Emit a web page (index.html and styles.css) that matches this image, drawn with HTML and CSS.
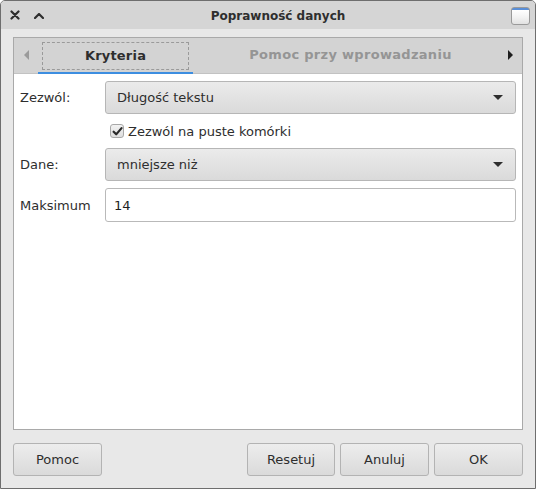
FILE: index.html
```html
<!DOCTYPE html>
<html lang="pl">
<head>
<meta charset="utf-8">
<title>Poprawność danych</title>
<link rel="stylesheet" href="styles.css">
</head>
<body>
<div class="window">
  <div class="titlebar">
    <div class="tb-left">
      <svg class="tb-icon" width="10" height="10" viewBox="0 0 10 10"><path d="M1.5 1.5 L8.5 8.5 M8.5 1.5 L1.5 8.5" stroke="#2e2e2e" stroke-width="2.2" stroke-linecap="round"/></svg>
      <svg class="tb-icon caret" width="10" height="6" viewBox="0 0 10 6"><path d="M1 5 L5 1 L9 5" fill="none" stroke="#2e2e2e" stroke-width="2.2" stroke-linecap="round" stroke-linejoin="round"/></svg>
    </div>
    <div class="title">Poprawność danych</div>
    <div class="tb-right"><div class="maxbtn"></div></div>
  </div>
  <div class="body">
    <div class="notebook">
      <div class="tabs">
        <div class="arrow"><span class="tri-left"></span></div>
        <div class="tab active"><span class="focus">Kryteria</span></div>
        <div class="tab inactive">Pomoc przy wprowadzaniu</div>
        <div class="arrow"><span class="tri-right"></span></div>
      </div>
      <div class="page">
        <div class="form">
          <div class="label">Zezwól:</div>
          <div class="combo"><span>Długość tekstu</span><span class="tri-down"></span></div>
          <div></div>
          <label class="check"><span class="box"><svg width="12" height="11" viewBox="0 0 12 11"><path d="M1.8 5.8 L4.6 8.6 L10.4 1.8" fill="none" stroke="#2a2a2a" stroke-width="2.4" stroke-linecap="round" stroke-linejoin="round"/></svg></span><span>Zezwól na puste komórki</span></label>
          <div class="label">Dane:</div>
          <div class="combo"><span>mniejsze niż</span><span class="tri-down"></span></div>
          <div class="label">Maksimum</div>
          <div class="entry">14</div>
        </div>
      </div>
    </div>
    <div class="buttons">
      <div class="btn">Pomoc</div>
      <div class="spacer"></div>
      <div class="btn w88">Resetuj</div>
      <div class="btn">Anuluj</div>
      <div class="btn">OK</div>
    </div>
  </div>
</div>
</body>
</html>
```

FILE: styles.css
```css
html, body {
  margin: 0;
  padding: 0;
  background: #ffffff;
}
body {
  font-family: "DejaVu Sans", "Liberation Sans", sans-serif;
  font-size: 13px;
  color: #2e2e2e;
}
.window {
  width: 536px;
  height: 489px;
  box-sizing: border-box;
  border: 1px solid #6e6e6e;
  border-radius: 5px 5px 0 0;
  background: #e8e8e8;
  display: flex;
  flex-direction: column;
  overflow: hidden;
}
.titlebar {
  height: 28px;
  flex: none;
  background: #d5d5d5;
  display: flex;
  align-items: center;
}
.tb-left {
  width: 60px;
  box-sizing: border-box;
  display: flex;
  align-items: center;
  padding-left: 9px;
  gap: 14px;
}
.tb-icon { display: block; }
.caret { margin-top: 1px; }
.title {
  flex: 1;
  text-align: center;
  font-weight: bold;
  font-size: 12px;
  color: #2e2e2e;
  padding-top: 1px;
}
.tb-right {
  width: 40px;
  box-sizing: border-box;
  display: flex;
  justify-content: flex-end;
  padding-right: 5px;
}
.maxbtn {
  width: 17px;
  height: 16px;
  border: 1px solid #9a9a9a;
  border-radius: 3px;
  background: linear-gradient(#5a8fd8 0, #5a8fd8 2px, #ffffff 2px, #f2f2f2 60%, #e2e2e2 100%);
  margin-top: 1px;
}
.body {
  flex: 1;
  display: flex;
  flex-direction: column;
  padding: 8px 12px 12px 12px;
  gap: 13px;
}
.notebook {
  flex: 1;
  border: 1px solid #a9a9a9;
  display: flex;
  flex-direction: column;
  background: #ffffff;
}
.tabs {
  height: 36px;
  flex: none;
  background: #d3d3d3;
  display: flex;
  box-shadow: inset 0 -1px 0 #c2c2c2;
}
.arrow {
  width: 24px;
  display: flex;
  align-items: center;
  justify-content: center;
}
.tri-left {
  width: 0; height: 0;
  border-top: 5px solid transparent;
  border-bottom: 5px solid transparent;
  border-right: 5px solid #9b9b9b;
  margin-bottom: 3px;
}
.tri-right {
  width: 0; height: 0;
  border-top: 5px solid transparent;
  border-bottom: 5px solid transparent;
  border-left: 5px solid #1e1e1e;
  margin-bottom: 3px;
}
.tab {
  display: flex;
  align-items: center;
  justify-content: center;
  font-weight: bold;
  box-sizing: border-box;
}
.tab.active {
  width: 155px;
  border-bottom: 2px solid #3d8ee0;
  padding: 4px 4px 2px 4px;
  color: #2e2e2e;
}
.focus {
  flex: 1;
  align-self: stretch;
  display: flex;
  align-items: center;
  justify-content: center;
  border: 1px dashed #9a9a9a;
  padding-bottom: 1px;
  letter-spacing: 0.2px;
}
.tab.inactive {
  flex: 1;
  color: #959595;
  padding: 0 0 4px 10px;
  letter-spacing: 0.3px;
}
.page {
  flex: 1;
  padding: 7px 6px 0 6px;
}
.form {
  display: grid;
  grid-template-columns: 85px 1fr;
  row-gap: 7px;
  align-items: center;
}
.label {
  color: #2e2e2e;
}
.combo {
  height: 33px;
  box-sizing: border-box;
  border: 1px solid #b6b6b6;
  border-radius: 3px;
  background: linear-gradient(#ebebeb, #dadada);
  display: flex;
  align-items: center;
  justify-content: space-between;
  padding: 0 12px 0 11px;
  color: #2e2e2e;
}
.tri-down {
  width: 0; height: 0;
  border-left: 5px solid transparent;
  border-right: 5px solid transparent;
  border-top: 5px solid #2e2e2e;
}
.check {
  height: 20px;
  display: flex;
  align-items: center;
  gap: 4px;
  padding-left: 5px;
}
.box {
  width: 14px;
  height: 14px;
  box-sizing: border-box;
  border: 1px solid #a8a8a8;
  border-radius: 3px;
  background: linear-gradient(#f2f2f2, #dedede);
  display: flex;
  align-items: center;
  justify-content: center;
}
.box svg { display: block; margin-left: 1px; }
.entry {
  height: 34px;
  box-sizing: border-box;
  border: 1px solid #b9b9b9;
  border-radius: 3px;
  background: #ffffff;
  display: flex;
  align-items: center;
  padding-left: 8px;
  color: #1e1e1e;
}
.buttons {
  display: flex;
  gap: 5px;
  height: 33px;
  flex: none;
}
.spacer { flex: 1; }
.btn {
  width: 89px;
  box-sizing: border-box;
  border: 1px solid #b3b3b3;
  border-radius: 3px;
  background: linear-gradient(#ededed, #dadada);
  display: flex;
  align-items: center;
  justify-content: center;
  color: #2e2e2e;
}
.btn.w88 { width: 88px; }
```
